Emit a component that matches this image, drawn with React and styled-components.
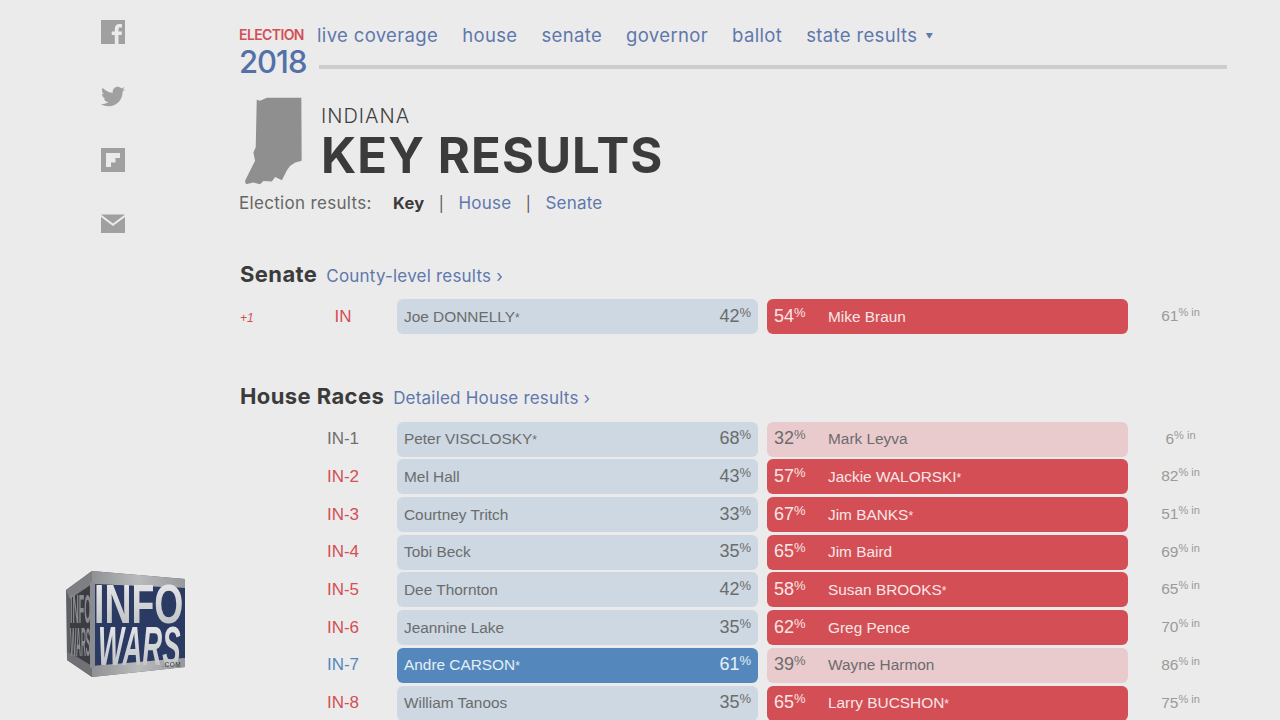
import React from "react";
import styled, { createGlobalStyle } from "styled-components";
import { FaTwitter } from "react-icons/fa";

const GlobalStyle = createGlobalStyle`
  html, body {
    margin: 0;
    height: 720px;
    overflow: hidden;
    background: #ebebeb;
  }
  * { box-sizing: border-box; }
`;

const Page = styled.div`
  display: flex;
  width: 1280px;
  height: 720px;
  overflow: hidden;
  font-family: Inter, "Liberation Sans", sans-serif;
`;

const ShareRail = styled.div`
  width: 240px;
  flex: none;
  padding: 20px 0 0 101px;
  display: flex;
  flex-direction: column;
  gap: 40px;
  color: #a0a0a0;
`;

const ShareIcon = styled.div`
  width: 24px;
  height: 24px;
  display: flex;
  align-items: center;
  justify-content: center;
`;

const Main = styled.div`
  width: 987px;
  flex: none;
`;

const Header = styled.div`
  display: flex;
  height: 80px;
  padding-top: 26px;
`;

const Brand = styled.div`
  width: 78px;
  flex: none;
  margin-left: -1px;
`;

const BrandTop = styled.div`
  font-size: 14px;
  line-height: 18px;
  font-weight: 600;
  letter-spacing: -0.6px;
  color: #d34f55;
`;

const BrandYear = styled.div`
  font-size: 31px;
  line-height: 36px;
  font-weight: 500;
  letter-spacing: -1px;
  color: #5470a8;
`;

const NavColumn = styled.div`
  flex: 1;
  min-width: 0;
`;

const Nav = styled.div`
  display: flex;
  gap: 24px;
  height: 21px;
  margin-top: -1px;
`;

const NavLink = styled.a`
  font-size: 18.5px;
  line-height: 21px;
  letter-spacing: 0.35px;
  color: #5f78ab;
`;

const Caret = styled.span`
  font-size: 7.5px;
  margin-left: 8px;
  vertical-align: 3px;
`;

const Rule = styled.div`
  height: 4px;
  margin: 19px 0 0 2px;
  background: #cdcdcd;
`;

const TitleBlock = styled.div`
  display: flex;
  height: 89px;
  margin-top: 17px;
  margin-left: 5px;
`;

const StateShape = styled.svg`
  width: 57px;
  height: 88px;
  flex: none;
  fill: #8f8f8f;
`;

const TitleText = styled.div`
  padding: 8px 0 0 19px;
`;

const StateName = styled.div`
  font-size: 20px;
  line-height: 22px;
  font-weight: 300;
  letter-spacing: 1px;
  color: #404040;
`;

const Title = styled.h1`
  margin: 0;
  font-size: 49px;
  line-height: 58px;
  font-weight: 700;
  letter-spacing: 1.1px;
  color: #3b3b3b;
`;

const Tabs = styled.div`
  display: flex;
  align-items: center;
  height: 22px;
  margin-top: 6px;
  font-size: 17px;
  letter-spacing: 0.2px;
  color: #666;
  margin-left: -1px;
`;

const TabLabel = styled.span`
  width: 154px;
  letter-spacing: 0.32px;
`;

const TabKey = styled.b`
  font-weight: 700;
  font-size: 16.5px;
  color: #3b3b3b;
`;

const TabLink = styled.a`
  color: #5f78ab;
`;

const TabSep = styled.span`
  margin: 0 14.5px;
  font-size: 15px;
  color: #555;
`;

const SectionHead = styled.div`
  display: flex;
  align-items: baseline;
  gap: 9px;
  height: 28px;
  margin-top: ${(props) => props.$top}px;
`;

const SectionTitle = styled.h2`
  margin: 0;
  font-size: 22px;
  line-height: 28px;
  font-weight: 700;
  letter-spacing: 0.4px;
  color: #3b3b3b;
`;

const SectionLink = styled.a`
  font-size: 17px;
  letter-spacing: 0.2px;
  color: #5f78ab;
`;

const Rows = styled.div`
  margin-top: ${(props) => props.$top}px;
`;

const Row = styled.div`
  display: grid;
  grid-template-columns: 157px 361px 370px 1fr;
  height: 37.7px;
  font-family: "Liberation Sans", Arial, sans-serif;
`;

const Flip = styled.div`
  grid-column: 1;
  display: grid;
  grid-template-columns: 78px 1fr;
  align-items: center;
  height: 35px;
`;

const Gain = styled.i`
  font-size: 12px;
  padding-top: 3px;
  color: #d34f55;
`;

const District = styled.div`
  justify-self: start;
  width: 50px;
  text-align: center;
  font-size: 17px;
  color: ${(props) =>
    props.$party === "r" ? "#d34f55" : props.$party === "d" ? "#5488bc" : "#6f6f6f"};
`;

const barColors = {
  r: { bg: "#d34f55", fg: "#f8e6e6" },
  d: { bg: "#5488bc", fg: "#e6eef6" },
  lr: { bg: "#e9cbce", fg: "#6c6c6c" },
  ld: { bg: "#cdd8e2", fg: "#6c6c6c" },
};

const Bar = styled.div`
  display: flex;
  align-items: center;
  justify-content: space-between;
  height: 35px;
  border-radius: 6px;
  padding: 0 7px;
  font-size: 15.4px;
  background: ${(props) => barColors[props.$kind].bg};
  color: ${(props) => barColors[props.$kind].fg};
`;

const RightBar = styled(Bar)`
  justify-content: flex-start;
  margin-left: 9px;
`;

const Star = styled.span`
  font-size: 12px;
`;

const Pct = styled.span`
  font-size: 18px;
  line-height: 18px;
  margin-top: -2px;
  width: ${(props) => (props.$fixed ? "54px" : "auto")};
  flex: none;
`;

const PctSign = styled.sup`
  font-size: 13px;
  line-height: 0;
  vertical-align: 5px;
`;

const Reporting = styled.div`
  width: 72px;
  height: 35px;
  padding-left: 33px;
  padding-top: 8px;
  font-size: 15.5px;
  color: #9a9a9a;
  text-align: center;
  white-space: nowrap;
`;

const ReportingSup = styled.sup`
  font-size: 11px;
  line-height: 0;
  vertical-align: 5px;
`;

const LogoWrap = styled.svg`
  position: fixed;
  left: 62px;
  top: 566px;
  width: 126px;
  height: 116px;
  font-family: "Liberation Sans", Arial, sans-serif;
`;

const senate = { left: "Joe DONNELLY", star: true, lp: 42, right: "Mike Braun", rp: 54, inPct: 61 };

const races = [
  { id: "IN-1", left: "Peter VISCLOSKY", star: true, lp: 68, right: "Mark Leyva", rp: 32, inPct: 6, party: "n", lk: "ld", rk: "lr" },
  { id: "IN-2", left: "Mel Hall", lp: 43, right: "Jackie WALORSKI", rightStar: true, rp: 57, inPct: 82, party: "r", lk: "ld", rk: "r" },
  { id: "IN-3", left: "Courtney Tritch", lp: 33, right: "Jim BANKS", rightStar: true, rp: 67, inPct: 51, party: "r", lk: "ld", rk: "r" },
  { id: "IN-4", left: "Tobi Beck", lp: 35, right: "Jim Baird", rp: 65, inPct: 69, party: "r", lk: "ld", rk: "r" },
  { id: "IN-5", left: "Dee Thornton", lp: 42, right: "Susan BROOKS", rightStar: true, rp: 58, inPct: 65, party: "r", lk: "ld", rk: "r" },
  { id: "IN-6", left: "Jeannine Lake", lp: 35, right: "Greg Pence", rp: 62, inPct: 70, party: "r", lk: "ld", rk: "r" },
  { id: "IN-7", left: "Andre CARSON", star: true, lp: 61, right: "Wayne Harmon", rp: 39, inPct: 86, party: "d", lk: "d", rk: "lr" },
  { id: "IN-8", left: "William Tanoos", lp: 35, right: "Larry BUCSHON", rightStar: true, rp: 65, inPct: 75, party: "r", lk: "ld", rk: "r" },
];

const FacebookIcon = () => (
  <svg width="24" height="24" viewBox="0 0 24 24">
    <path
      fill="currentColor"
      fillRule="evenodd"
      d="M0 0H24V24H17.5V15H20.6L21 11.4H17.5V9.3C17.5 8.2 17.8 7.6 19.2 7.6H21V4.3C20.6 4.2 19.6 4.1 18.4 4.1C15.7 4.1 13.8 5.7 13.8 8.8V11.4H10.7V15H13.8V24H0Z"
    />
  </svg>
);

const FlipboardIcon = () => (
  <svg width="24" height="24" viewBox="0 0 24 24">
    <path
      fill="currentColor"
      fillRule="evenodd"
      d="M0 0H24V24H0ZM5 5V19H10V14.5H14.5V10H19V5Z"
    />
  </svg>
);

const MailIcon = () => (
  <svg width="24" height="24" viewBox="0 0 24 24">
    <path fill="currentColor" d="M0 2.5H24L12 11.5Z" />
    <path fill="currentColor" d="M0 5L12 14L24 5V21H0Z" />
  </svg>
);

const Logo = () => (
  <LogoWrap viewBox="0 0 126 116">
    <defs>
      <linearGradient id="metal" x1="0" y1="0" x2="1" y2="0">
        <stop offset="0" stopColor="#8f9194" />
        <stop offset="0.5" stopColor="#b9babc" />
        <stop offset="1" stopColor="#97999c" />
      </linearGradient>
      <linearGradient id="letter" x1="0" y1="0" x2="0" y2="1">
        <stop offset="0" stopColor="#eeeeef" />
        <stop offset="1" stopColor="#b9bbbe" />
      </linearGradient>
    </defs>
    <polygon points="4,24 30,5 123,13 123,101 30,111 5,94" fill="#5e6064" />
    <polygon points="30,5 123,13 123,22 30,18" fill="url(#metal)" />
    <polygon points="4,24 30,5 30,18 8,33" fill="#7d7f82" />
    <polygon points="30,18 123,22 123,92 30,100" fill="#2b3a63" />
    <polygon points="8,33 30,18 30,100 8,86" fill="#3c3d42" />
    <polygon points="30,100 123,92 123,101 30,111" fill="url(#metal)" />
    <polygon points="5,86 30,100 30,111 5,94" fill="#6f7174" />
    <polygon points="28,16 33,16 33,102 28,102" fill="#8b8d90" />
    <text transform="translate(8 57) scale(0.22 1)" fontWeight="700" fontSize="40" fill="#8a8c90">INFO</text>
    <text transform="translate(8 90) scale(0.17 1)" fontWeight="700" fontSize="40" fill="#8a8c90">WARS</text>
    <text transform="translate(32 57) scale(0.68 1)" fontWeight="700" fontSize="55" fill="url(#letter)">INFO</text>
    <text transform="translate(36 99) scale(0.5 1)" fontWeight="700" fontStyle="italic" fontSize="55" fill="url(#letter)">WARS</text>
    <text x="100" y="101" fontSize="6.5" letterSpacing="0.6" fill="#3a3a3a">.COM</text>
  </LogoWrap>
);

const RaceRow = ({ race, gain }) => (
  <Row>
    <Flip>
      {gain ? <Gain>{gain}</Gain> : <span />}
      <District $party={race.party}>{race.id}</District>
    </Flip>
    <Bar $kind={race.lk}>
      <span>{race.left}{race.star && <Star>*</Star>}</span>
      <Pct>
        {race.lp}
        <PctSign>%</PctSign>
      </Pct>
    </Bar>
    <RightBar $kind={race.rk}>
      <Pct $fixed>
        {race.rp}
        <PctSign>%</PctSign>
      </Pct>
      <span>{race.right}{race.rightStar && <Star>*</Star>}</span>
    </RightBar>
    <Reporting>
      {race.inPct}
      <ReportingSup>% in</ReportingSup>
    </Reporting>
  </Row>
);

export default function App() {
  return (
    <>
      <GlobalStyle />
      <Page>
        <ShareRail>
          <ShareIcon><FacebookIcon /></ShareIcon>
          <ShareIcon><FaTwitter size={25} /></ShareIcon>
          <ShareIcon><FlipboardIcon /></ShareIcon>
          <ShareIcon><MailIcon /></ShareIcon>
        </ShareRail>
        <Main>
          <Header>
            <Brand>
              <BrandTop>ELECTION</BrandTop>
              <BrandYear>2018</BrandYear>
            </Brand>
            <NavColumn>
              <Nav>
                <NavLink>live coverage</NavLink>
                <NavLink>house</NavLink>
                <NavLink>senate</NavLink>
                <NavLink>governor</NavLink>
                <NavLink>ballot</NavLink>
                <NavLink>state results<Caret>▼</Caret></NavLink>
              </Nav>
              <Rule />
            </NavColumn>
          </Header>
          <TitleBlock>
            <StateShape viewBox="15 22 170 258">
              <path d="M50 28L60 31L80 22H183L184 210L165 215L150 225L140 238L125 268L105 258L95 272L70 270L60 280L40 275L18 280L15 270L30 240L45 210L40 185L47 170Z" />
            </StateShape>
            <TitleText>
              <StateName>INDIANA</StateName>
              <Title>KEY RESULTS</Title>
            </TitleText>
          </TitleBlock>
          <Tabs>
            <TabLabel>Election results:</TabLabel>
            <TabKey>Key</TabKey>
            <TabSep>|</TabSep>
            <TabLink>House</TabLink>
            <TabSep>|</TabSep>
            <TabLink>Senate</TabLink>
          </Tabs>
          <SectionHead $top={46}>
            <SectionTitle>Senate</SectionTitle>
            <SectionLink>County-level results ›</SectionLink>
          </SectionHead>
          <Rows $top={11}>
            <RaceRow
              gain="+1"
              race={{ ...senate, id: "IN", party: "r", lk: "ld", rk: "r" }}
            />
          </Rows>
          <SectionHead $top={45}>
            <SectionTitle>House Races</SectionTitle>
            <SectionLink>Detailed House results ›</SectionLink>
          </SectionHead>
          <Rows $top={12}>
            {races.map((race) => (
              <RaceRow key={race.id} race={race} />
            ))}
          </Rows>
        </Main>
        <Logo />
      </Page>
    </>
  );
}
